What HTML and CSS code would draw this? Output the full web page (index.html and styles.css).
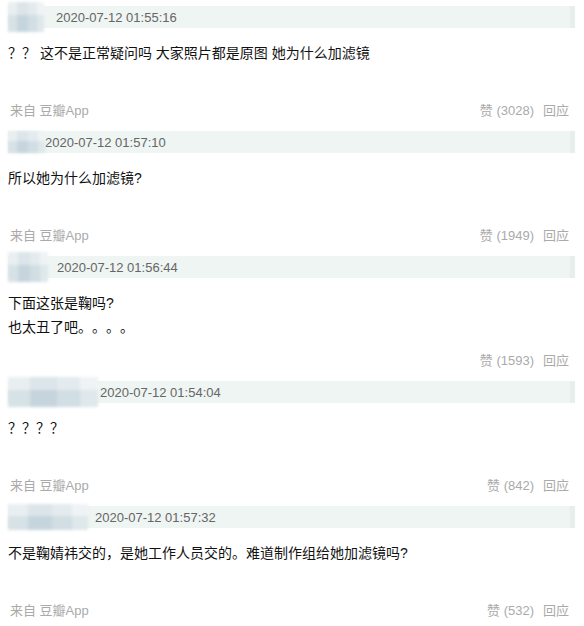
FILE: index.html
```html
<!DOCTYPE html>
<html lang="zh">
<head>
  <meta charset="UTF-8" />
  <title>评论</title>
  <link rel="stylesheet" href="styles.css">
</head>
<body>
  <div class="comments">

    <div class="comment">
      <div class="head">
        <span class="avatar av1"></span>
        <span class="time">2020-07-12 01:55:16</span>
      </div>
      <div class="text">
        <p>？？ 这不是正常疑问吗 大家照片都是原图 她为什么加滤镜</p>
      </div>
      <div class="foot">
        <span class="from">来自 豆瓣App</span>
        <span class="actions">赞 (3028)<a>回应</a></span>
      </div>
    </div>

    <div class="comment">
      <div class="head">
        <span class="avatar av2"></span>
        <span class="time">2020-07-12 01:57:10</span>
      </div>
      <div class="text">
        <p>所以她为什么加滤镜?</p>
      </div>
      <div class="foot">
        <span class="from">来自 豆瓣App</span>
        <span class="actions">赞 (1949)<a>回应</a></span>
      </div>
    </div>

    <div class="comment">
      <div class="head">
        <span class="avatar av3"></span>
        <span class="time">2020-07-12 01:56:44</span>
      </div>
      <div class="text">
        <p>下面这张是鞠吗?</p>
        <p>也太丑了吧。。。。</p>
      </div>
      <div class="foot">
        <span class="from"></span>
        <span class="actions">赞 (1593)<a>回应</a></span>
      </div>
    </div>

    <div class="comment">
      <div class="head">
        <span class="avatar av4"></span>
        <span class="time">2020-07-12 01:54:04</span>
      </div>
      <div class="text">
        <p>？？？？</p>
      </div>
      <div class="foot">
        <span class="from">来自 豆瓣App</span>
        <span class="actions">赞 (842)<a>回应</a></span>
      </div>
    </div>

    <div class="comment">
      <div class="head">
        <span class="avatar av5"></span>
        <span class="time">2020-07-12 01:57:32</span>
      </div>
      <div class="text">
        <p>不是鞠婧祎交的，是她工作人员交的。难道制作组给她加滤镜吗?</p>
      </div>
      <div class="foot">
        <span class="from">来自 豆瓣App</span>
        <span class="actions">赞 (532)<a>回应</a></span>
      </div>
    </div>

  </div>
</body>
</html>
```

FILE: styles.css
```css
body {
  margin: 0;
  background: #fff;
  font-family: "Liberation Sans", Arial, "Noto Sans CJK SC", sans-serif;
  color: #111;
  text-spacing-trim: space-all;
}

.comments {
  padding: 6px 9px 0 8px;
}

.comment {
  margin-bottom: 10px;
}

.head {
  display: flex;
  align-items: center;
  height: 22px;
  background: #eef5f2;
  border-right: 5px solid #e7eeeb;
}

.avatar {
  height: 30px;
  flex-shrink: 0;
  filter: blur(1.5px);
  background:
    linear-gradient(180deg, rgba(255, 255, 255, 0.35) 0 45%, rgba(180, 200, 210, 0.15) 45% 100%),
    linear-gradient(90deg, #dde6ea 0 25%, #c9d7df 25% 55%, #d6e1e6 55% 80%, #e6edef 80%);
}

.av1 { width: 36px; margin-right: 12px; }
.av2 { width: 37px; margin-right: 0; height: 22px; }
.av3 { width: 40px; margin-right: 9px; }
.av4 { width: 90px; margin-right: 2px; }
.av5 { width: 80px; margin-right: 7px; height: 26px; }

.time {
  font-size: 13px;
  color: #666;
  white-space: nowrap;
}

.text {
  margin-top: 13px;
  min-height: 48px;
  font-size: 14px;
  line-height: 24px;
}

.text p {
  margin: 0;
}

.foot {
  display: flex;
  justify-content: space-between;
  margin-top: 12px;
  height: 20px;
  line-height: 20px;
  font-size: 13px;
  color: #aaa;
  padding: 0 6px 0 2px;
}

.actions a {
  margin-left: 9px;
}
```
